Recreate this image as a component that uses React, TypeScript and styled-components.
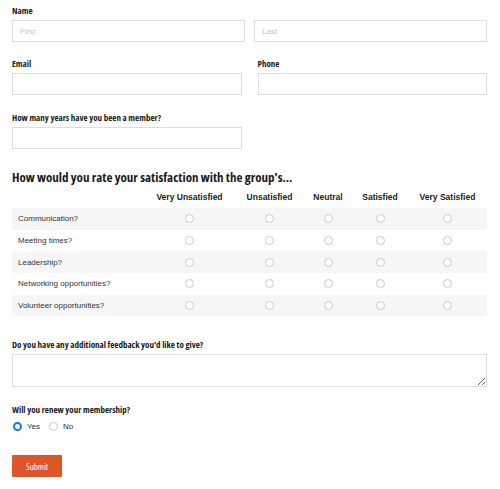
import React from "react";
import styled, { createGlobalStyle } from "styled-components";

const Global = createGlobalStyle`
  html, body { margin: 0; padding: 0; background: #fff; }
  body { font-family: "Liberation Sans", Arial, sans-serif; }
`;

const Form = styled.form`
  padding: 5px 13px 12px 12px;
  display: flex;
  flex-direction: column;
`;

const Label = styled.div<{ $mt?: number }>`
  font-family: "Open Sans", sans-serif;
  font-stretch: 75%;
  font-weight: 700;
  font-size: 9px;
  line-height: 12px;
  color: #1a1a1a;
  margin-top: ${(p) => p.$mt ?? 0}px;
  margin-bottom: 3px;
`;

const Row = styled.div<{ $gap: number }>`
  display: flex;
  gap: ${(p) => p.$gap}px;
`;

const Field = styled.div`
  display: flex;
  flex-direction: column;
  flex: 1;
`;

const Input = styled.input<{ $w?: number }>`
  box-sizing: border-box;
  height: 22px;
  width: ${(p) => (p.$w ? `${p.$w}px` : "100%")};
  border: 1px solid #ddd;
  border-radius: 0;
  padding: 0 7px;
  margin: 0;
  font-family: "Liberation Sans", Arial, sans-serif;
  font-size: 8px;
  color: #333;
  outline: none;
  &::placeholder { color: #c4c4c4; }
`;

const Heading = styled.h2`
  margin: 20px 0 0;
  font-family: "Open Sans", sans-serif;
  font-stretch: 75%;
  font-weight: 700;
  font-size: 13px;
  line-height: 16px;
  color: #1a1a1a;
`;

const Table = styled.div`
  display: grid;
  grid-template-columns: 132px 91px 69px 48px 56px 79px;
`;

const HeadCell = styled.div`
  font-family: "Liberation Sans", Arial, sans-serif;
  font-weight: 700;
  font-size: 8.5px;
  line-height: 12px;
  color: #222;
  text-align: center;
  padding: 6px 0 5px;
  white-space: nowrap;
`;

const Cell = styled.div<{ $alt: boolean; $label?: boolean }>`
  height: 21.7px;
  display: flex;
  align-items: center;
  justify-content: ${(p) => (p.$label ? "flex-start" : "center")};
  padding-left: ${(p) => (p.$label ? "6px" : "0")};
  background: ${(p) => (p.$alt ? "#f6f6f6" : "#fff")};
  font-family: "Liberation Sans", Arial, sans-serif;
  font-size: 8px;
  color: #333;
  white-space: nowrap;
`;

const Radio = styled.span<{ $checked?: boolean }>`
  box-sizing: border-box;
  display: inline-block;
  width: 9px;
  height: 9px;
  border-radius: 50%;
  background: #fff;
  border: ${(p) => (p.$checked ? "2.5px solid #1a78e0" : "1px solid #c9c9c9")};
  flex-shrink: 0;
`;

const TextArea = styled.textarea`
  box-sizing: border-box;
  width: 100%;
  height: 33px;
  margin: 0;
  border: 1px solid #ddd;
  border-radius: 0;
  resize: vertical;
  display: block;
  outline: none;
`;

const Choices = styled.div`
  display: flex;
  align-items: center;
  gap: 9px;
  margin-top: 3px;
  margin-left: 1px;
  height: 9px;
`;

const Choice = styled.label`
  display: flex;
  align-items: center;
  gap: 5px;
  font-family: "Liberation Sans", Arial, sans-serif;
  font-size: 8px;
  line-height: 9px;
  color: #333;
`;

const Submit = styled.button`
  align-self: flex-start;
  margin-top: 24px;
  width: 50px;
  height: 22px;
  border: none;
  border-radius: 1px;
  background: #de5527;
  color: #fff;
  font-family: "Open Sans", sans-serif;
  font-stretch: 75%;
  font-size: 9px;
  padding: 0;
`;

const columns = ["Very Unsatisfied", "Unsatisfied", "Neutral", "Satisfied", "Very Satisfied"];
const rows = [
  "Communication?",
  "Meeting times?",
  "Leadership?",
  "Networking opportunities?",
  "Volunteer opportunities?",
];

export default function App() {
  return (
    <>
      <Global />
      <Form onSubmit={(e) => e.preventDefault()}>
        <Label>Name</Label>
        <Row $gap={9}>
          <Field>
            <Input placeholder="First" />
          </Field>
          <Field>
            <Input placeholder="Last" />
          </Field>
        </Row>

        <Row $gap={16}>
          <Field>
            <Label $mt={16}>Email</Label>
            <Input />
          </Field>
          <Field>
            <Label $mt={16}>Phone</Label>
            <Input />
          </Field>
        </Row>

        <Label $mt={17}>How many years have you been a member?</Label>
        <Input $w={230} />

        <Heading>How would you rate your satisfaction with the group's...</Heading>
        <Table>
          <HeadCell />
          {columns.map((c) => (
            <HeadCell key={c}>{c}</HeadCell>
          ))}
          {rows.map((r, i) => (
            <React.Fragment key={r}>
              <Cell $alt={i % 2 === 0} $label>
                {r}
              </Cell>
              {columns.map((c) => (
                <Cell key={c} $alt={i % 2 === 0}>
                  <Radio />
                </Cell>
              ))}
            </React.Fragment>
          ))}
        </Table>

        <Label $mt={23}>Do you have any additional feedback you'd like to give?</Label>
        <TextArea />

        <Label $mt={17}>Will you renew your membership?</Label>
        <Choices>
          <Choice>
            <Radio $checked /> Yes
          </Choice>
          <Choice>
            <Radio /> No
          </Choice>
        </Choices>

        <Submit type="submit">Submit</Submit>
      </Form>
    </>
  );
}
